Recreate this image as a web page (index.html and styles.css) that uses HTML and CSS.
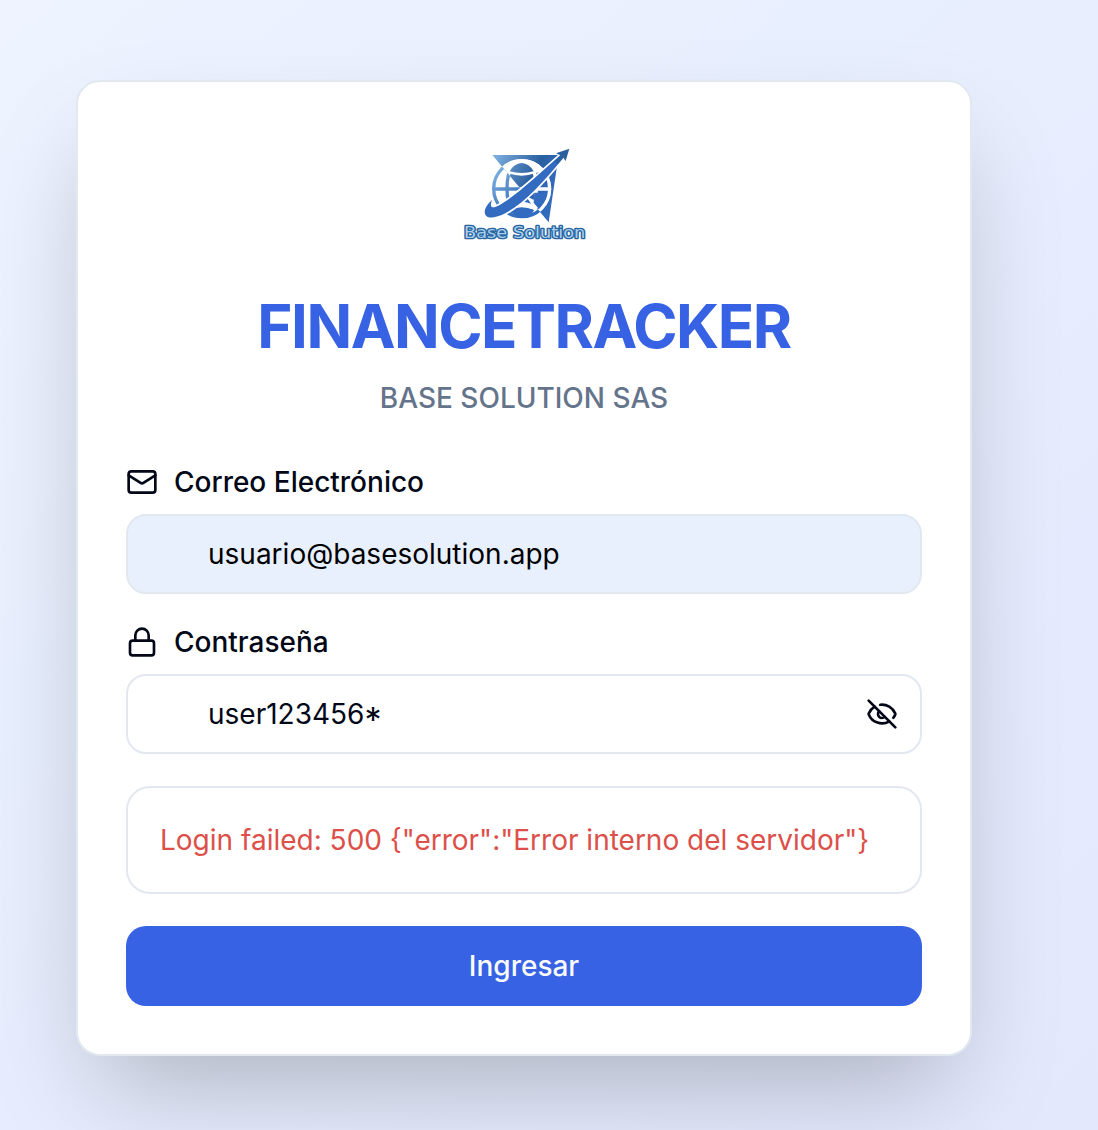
FILE: index.html
```html
<!DOCTYPE html>
<html lang="es">
<head>
<meta charset="utf-8">
<title>FinanceTracker</title>
<link rel="stylesheet" href="styles.css">
</head>
<body>
<main class="card">
  <header class="brand">
    <svg class="logo" viewBox="0 0 420 330" role="img" aria-label="Base Solution">
      <defs>
        <linearGradient id="sail" x1="110" y1="60" x2="320" y2="170" gradientUnits="userSpaceOnUse">
          <stop offset="0" stop-color="#7fb0e0"/><stop offset=".55" stop-color="#2a5f9f"/><stop offset=".75" stop-color="#3068b8"/><stop offset="1" stop-color="#336bc0"/>
        </linearGradient>
        <linearGradient id="globe" x1="110" y1="100" x2="230" y2="210" gradientUnits="userSpaceOnUse">
          <stop offset="0" stop-color="#7fb2e0"/><stop offset=".7" stop-color="#3870bb"/><stop offset="1" stop-color="#336bc0"/>
        </linearGradient>
        <clipPath id="upper"><path d="M112 45H420V247H281Z"/></clipPath>
        <clipPath id="lower"><path d="M112 45L281 247H0V45Z"/></clipPath>
        <g id="grid" fill="none" stroke-width="10">
          <circle cx="200" cy="146" r="84"/>
          <path d="M116 147H284M174 72C150 108 150 184 174 220M226 72C250 108 250 184 226 220"/>
        </g>
      </defs>
      <path d="M112 45H311L281 247Z" fill="url(#sail)"/>
      <g clip-path="url(#upper)">
        <use href="#grid" stroke="#fff"/>
        <path d="M200 58C160 58 136 82 132 100L160 100Q200 114 240 100L266 94C256 72 232 58 200 58Z" fill="#fff"/>
        <path d="M164 94Q176 71 200 69Q224 71 236 94Q200 104 164 94Z" fill="url(#sail)"/>
      </g>
      <g clip-path="url(#lower)"><use href="#grid" stroke="url(#globe)"/></g>
      <path d="M160 212Q200 190 241 212L260 190L232 178L200 160L140 190Z" fill="#fff"/>
      <path d="M164 210Q200 194 237 210Q224 228 200 230Q176 228 164 210ZM176 190L206 158L228 191Q200 180 176 190ZM238 158H274Q272 184 252 207L236 188Z" fill="#336bc0"/>
      <path d="M112 179C78 208 84 238 117 232C176 221 254 142 325 53L316 46C256 98 180 172 128 198C108 208 103 198 112 179Z" fill="#336bc0" stroke="#fff" stroke-width="10" paint-order="stroke"/>
      <path d="M303 40L343 26L332 63L325 53L308 73L299 63L316 46Z" fill="#2b609f"/>
      <text class="logo-text" x="27" y="294" textLength="364" lengthAdjust="spacingAndGlyphs">Base Solution</text>
    </svg>
    <h1 class="title">FINANCETRACKER</h1>
    <p class="company">BASE SOLUTION SAS</p>
  </header>
  <form class="form">
    <div class="field">
      <label class="label" for="email">
        <svg class="icon" viewBox="0 0 24 24"><rect x="2" y="4" width="20" height="16" rx="2"/><path d="m22 7-8.97 5.7a1.94 1.94 0 0 1-2.06 0L2 7"/></svg>
        Correo Electrónico
      </label>
      <div class="control control-filled"><input class="input" id="email" type="text" value="usuario@basesolution.app"></div>
    </div>
    <div class="field">
      <div class="label" id="password-label">
        <svg class="icon" viewBox="0 0 24 24"><rect x="3" y="11" width="18" height="11" rx="2"/><path d="M7 11V7a5 5 0 0 1 10 0v4"/></svg>
        Contraseña
      </div>
      <div class="control">
        <div class="input" role="textbox" contenteditable="true" spellcheck="false" aria-labelledby="password-label">user123456<span class="asterisk">*</span></div>
        <svg class="icon" viewBox="0 0 24 24"><path d="M10.733 5.076a10.744 10.744 0 0 1 11.205 6.575 1 1 0 0 1 0 .696 10.747 10.747 0 0 1-1.444 2.49"/><path d="M14.084 14.158a3 3 0 0 1-4.242-4.242"/><path d="M17.479 17.499a10.75 10.75 0 0 1-15.417-5.151 1 1 0 0 1 0-.696 10.75 10.75 0 0 1 4.446-5.143"/><path d="m2 2 20 20"/></svg>
      </div>
    </div>
    <div class="alert" role="alert">Login failed: 500 {"error":"Error interno del servidor"}</div>
    <button class="submit" type="button">Ingresar</button>
  </form>
</main>
</body>
</html>
```

FILE: styles.css
```css
* { box-sizing: border-box; }

body {
  margin: 0;
  height: 1130px;
  padding: 80px 126px 0 76px;
  overflow: hidden;
  background: linear-gradient(140deg, #eef3ff, #e8effe 35%, #e3e8fd);
  color: #020817;
  font: 400 28px/40px Inter, "Liberation Sans", sans-serif;
}

.card {
  width: 896px;
  height: 976px;
  padding: 48px;
  border: 2px solid #e2e8f0;
  border-radius: 24px;
  background: #fff;
  box-shadow: 0 50px 100px -24px rgb(0 0 0 / 25%);
}

.brand {
  display: flex;
  flex-direction: column;
  align-items: center;
  height: 336px;
  padding-top: 10px;
}

.logo {
  width: 140px;
  height: 110px;
  margin-left: 2px;
}

.logo-text {
  font: 400 47px "DejaVu Sans", sans-serif;
  fill: #a6cfee;
  stroke: #2a659f;
  stroke-width: 8px;
  stroke-linejoin: round;
  paint-order: stroke;
}

.title {
  margin: 40px 0 0;
  color: #3662e3;
  font-size: 60px;
  font-weight: 700;
  line-height: 72px;
  letter-spacing: -1.5px;
}

.company {
  margin: 16px 0 0;
  color: #64748b;
  font-weight: 450;
}

.form {
  display: flex;
  flex-direction: column;
  gap: 32px;
}

.field {
  display: flex;
  flex-direction: column;
  gap: 16px;
}

.label {
  display: flex;
  align-items: center;
  gap: 16px;
  height: 32px;
  font-weight: 500;
}

.icon {
  flex: none;
  width: 32px;
  height: 32px;
  fill: none;
  stroke: currentColor;
  stroke-width: 2;
  stroke-linecap: round;
  stroke-linejoin: round;
}

.control {
  display: flex;
  align-items: center;
  height: 80px;
  padding: 0 22px 0 80px;
  border: 2px solid #e2e8f0;
  border-radius: 20px;
}

.control-filled {
  background: #e8f0fe;
  color: #000;
}

.input {
  flex: 1;
  min-width: 0;
  padding: 0;
  border: 0;
  outline: 0;
  background: none;
  color: inherit;
  font: inherit;
}

.asterisk {
  display: inline-block;
  font-size: 34px;
  line-height: 1;
  transform: translateY(8px);
}

.alert {
  height: 108px;
  padding: 32px;
  border: 2px solid #e2e8f0;
  border-radius: 24px;
  color: #dc5049;
}

.submit {
  height: 80px;
  border: 0;
  border-radius: 20px;
  background: #3662e3;
  color: #f8fafc;
  font: inherit;
  font-weight: 500;
}
```
